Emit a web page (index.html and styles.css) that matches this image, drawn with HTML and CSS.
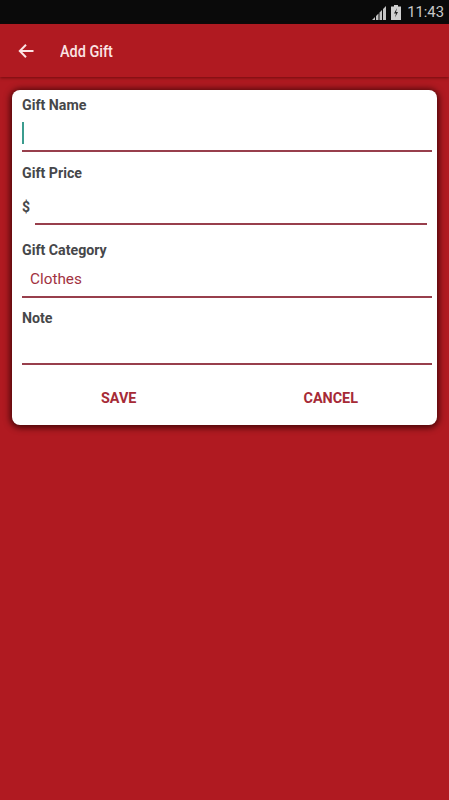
FILE: index.html
```html
<!DOCTYPE html>
<html lang="en">
<head>
<meta charset="utf-8">
<title>Add Gift</title>
<link rel="stylesheet" href="styles.css">
</head>
<body>
<div class="status">
  <svg class="signal" viewBox="0 0 14 14" width="14" height="14"><path d="M0 14L3 11V14ZM4 14V10L6.5 7.5V14ZM7.5 14V6.5L10 4V14ZM11 14V3L14 0V14Z" fill="#c4c4c4"/></svg>
  <svg class="battery" viewBox="0 0 10 15" width="10" height="15"><path d="M3 0H7V1.5H10V15H0V1.5H3Z" fill="#d0d0d0"/><path d="M6 3L3 8.5H5L4 12.5L7 7H5Z" fill="#222"/></svg>
  <span class="time">11:43</span>
</div>
<header class="appbar">
  <svg class="back" viewBox="0 0 16 16" width="16" height="16"><path d="M15.5 8H2M8 1.8L1.8 8L8 14.2" fill="none" stroke="#fbe4e4" stroke-width="2"/></svg>
  <h1 class="title">Add Gift</h1>
</header>
<main class="page">
  <form class="card">
    <div class="field field-name">
      <span class="label">Gift Name</span>
      <div class="input input-name"><span class="caret"></span></div>
    </div>
    <div class="field field-price">
      <span class="label">Gift Price</span>
      <div class="price-row">
        <span class="dollar">$</span>
        <div class="input input-price"></div>
      </div>
    </div>
    <div class="field field-category">
      <span class="label">Gift Category</span>
      <div class="input input-category"><span class="value">Clothes</span></div>
    </div>
    <div class="field field-note">
      <span class="label">Note</span>
      <div class="input input-note"></div>
    </div>
    <div class="actions">
      <span class="action">SAVE</span>
      <span class="action">CANCEL</span>
    </div>
  </form>
</main>
</body>
</html>
```
FILE: styles.css
```css
html, body { margin: 0; padding: 0; }
body {
  width: 449px;
  height: 800px;
  overflow: hidden;
  background: #b01a21;
  font-family: Roboto, "Liberation Sans", sans-serif;
}
.status {
  height: 24px;
  background: #0a0a0a;
  display: flex;
  align-items: center;
  justify-content: flex-end;
  padding-right: 5px;
  box-sizing: border-box;
}
.signal { margin-right: 5px; margin-top: 1px; }
.battery { margin-right: 6px; }
.time { color: #c8c8c8; font-size: 14.8px; line-height: 24px; }
.appbar {
  height: 53px;
  display: flex;
  align-items: center;
  background: #b01a21;
  box-shadow: 0 1px 3px rgba(70, 0, 0, .6);
}
.back { margin-left: 18px; }
.title {
  margin: 0 0 0 26px;
  font-size: 17px;
  font-weight: 500;
  color: #fbe4e4;
  transform: scaleX(.85);
  transform-origin: left;
}
.page { padding: 13px 12px 0; }
.card {
  height: 335px;
  background: #fff;
  border-radius: 8px;
  box-shadow: 0 1px 6px 2px rgba(40, 0, 0, .75);
  padding: 0 5px 0 10px;
  display: flex;
  flex-direction: column;
}
.label {
  display: block;
  font-size: 14.2px;
  font-weight: 700;
  line-height: 16px;
  color: #46474a;
}
.input { border-bottom: 2px solid #983f4c; box-sizing: border-box; }
.field-name { padding-top: 7px; }
.input-name { height: 39px; padding-top: 9px; }
.caret { display: block; width: 2px; height: 22px; background: #3b9c8e; }
.field-price { padding-top: 13px; }
.price-row { display: flex; align-items: flex-end; }
.dollar { font-size: 14px; font-weight: 700; color: #46474a; line-height: 16px; width: 13px; padding-bottom: 10px; }
.input-price { flex: 1; height: 44px; margin-right: 5px; }
.field-category { padding-top: 17px; }
.input-category { height: 40px; padding: 12px 0 0 8px; }
.value { font-size: 15.3px; line-height: 18px; color: #a2323f; display: block; }
.field-note { padding-top: 12px; }
.input-note { height: 39px; }
.actions { display: flex; padding-top: 25px; }
.action {
  font-size: 14.4px;
  font-weight: 700;
  line-height: 18px;
  color: #a62a36;
}
.action:first-child { margin-left: 79px; }
.action:last-child { margin-left: 167px; }
```
